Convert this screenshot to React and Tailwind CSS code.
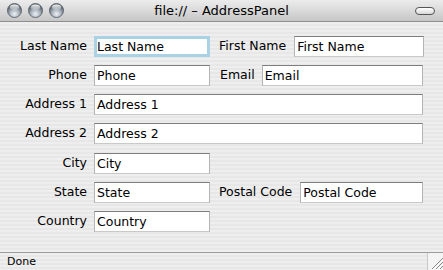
import React from "react";

function Light() {
  return (
    <svg width="15" height="15" viewBox="0 0 15 15" className="block">
      <defs>
        <radialGradient id="lg" cx="50%" cy="75%" r="60%">
          <stop offset="0%" stopColor="#eef2f6" />
          <stop offset="55%" stopColor="#aab3bd" />
          <stop offset="100%" stopColor="#5e6670" />
        </radialGradient>
        <linearGradient id="hl" x1="0" y1="0" x2="0" y2="1">
          <stop offset="0%" stopColor="#ffffff" stopOpacity="0.95" />
          <stop offset="100%" stopColor="#ffffff" stopOpacity="0.1" />
        </linearGradient>
      </defs>
      <circle cx="7.5" cy="7.5" r="7" fill="url(#lg)" stroke="#5a626b" strokeWidth="0.9" />
      <ellipse cx="7.5" cy="4.3" rx="4.6" ry="2.8" fill="url(#hl)" />
    </svg>
  );
}

function Field({ value, focus, className = "" }) {
  return (
    <div
      className={
        "h-[21px] bg-white flex items-center overflow-hidden whitespace-nowrap " +
        (focus
          ? "border-[3px] border-[#a9d2e6] pl-[0px] "
          : "border border-[#9a9a9a] border-t-[#7d7d7d] border-b-[#c9c9c9] border-x-[#b4b4b4] pl-[2px] ") +
        className
      }
    >
      <span className="text-[12.5px] text-black leading-none pt-[1px]">{value}</span>
    </div>
  );
}

function Label({ children, className = "" }) {
  return (
    <div className={"text-[12.5px] text-black leading-none whitespace-nowrap " + className}>
      {children}
    </div>
  );
}

export default function App() {
  const stripe =
    "bg-[repeating-linear-gradient(to_bottom,#eeeeee_0px,#eeeeee_2px,#e7e7e7_2px,#e7e7e7_4px)]";
  return (
    <div
      className="w-[443px] h-[270px] flex flex-col overflow-hidden"
      style={{ fontFamily: '"DejaVu Sans", "Liberation Sans", sans-serif' }}
    >
      {/* Title bar */}
      <div className="h-[22px] shrink-0 relative flex items-center justify-center bg-gradient-to-b from-[#ececec] via-[#dadada] to-[#c6c6c6] border-b border-[#8e8e8e]">
        <div className="absolute left-[7px] top-[3px] flex gap-[6px]">
          <Light />
          <Light />
          <Light />
        </div>
        <span className="text-[13px] text-black leading-none">file:// – AddressPanel</span>
        <div className="absolute right-[8px] top-[7px] w-[20px] h-[8px] rounded-full border border-[#555] bg-gradient-to-b from-[#ffffff] to-[#d8d8d8]" />
      </div>

      {/* Form */}
      <div className={"flex-1 flex flex-col gap-[8px] pt-[14px] pr-[20px] " + stripe}>
        <div className="flex items-center">
          <Label className="w-[87px] text-right">Last Name</Label>
          <Field value="Last Name" focus className="ml-[7px] w-[116px]" />
          <Label className="ml-[9px]">First Name</Label>
          <Field value="First Name" className="ml-[8px] flex-1 -mr-[1px]" />
        </div>
        <div className="flex items-center">
          <Label className="w-[87px] text-right">Phone</Label>
          <Field value="Phone" className="ml-[7px] w-[116px]" />
          <Label className="ml-[10px]">Email</Label>
          <Field value="Email" className="ml-[7px] flex-1" />
        </div>
        <div className="flex items-center">
          <Label className="w-[87px] text-right">Address 1</Label>
          <Field value="Address 1" className="ml-[7px] flex-1" />
        </div>
        <div className="flex items-center">
          <Label className="w-[87px] text-right">Address 2</Label>
          <Field value="Address 2" className="ml-[7px] flex-1" />
        </div>
        <div className="flex items-center mt-[1px]">
          <Label className="w-[87px] text-right">City</Label>
          <Field value="City" className="ml-[7px] w-[116px]" />
        </div>
        <div className="flex items-center">
          <Label className="w-[87px] text-right">State</Label>
          <Field value="State" className="ml-[7px] w-[116px]" />
          <Label className="ml-[9px]">Postal Code</Label>
          <Field value="Postal Code" className="ml-[8px] flex-1" />
        </div>
        <div className="flex items-center">
          <Label className="w-[87px] text-right">Country</Label>
          <Field value="Country" className="ml-[7px] w-[116px]" />
        </div>
      </div>

      {/* Status bar */}
      <div className={"h-[18px] shrink-0 flex items-stretch border-t border-[#9c9c9c] " + stripe}>
        <div className="flex-1 flex items-center pl-[7px]">
          <span className="text-[11px] text-black leading-none">Done</span>
        </div>
        <div className="w-[16px] border-l border-[#c8c8c8] bg-[#f4f4f4] relative">
          <svg width="16" height="17" viewBox="0 0 16 17" className="absolute inset-0">
            <line x1="15" y1="5" x2="4" y2="16" stroke="#8a8a8a" strokeWidth="1" />
            <line x1="15" y1="9" x2="8" y2="16" stroke="#8a8a8a" strokeWidth="1" />
            <line x1="15" y1="13" x2="12" y2="16" stroke="#8a8a8a" strokeWidth="1" />
            <line x1="16" y1="6" x2="5" y2="17" stroke="#ffffff" strokeWidth="1" />
            <line x1="16" y1="10" x2="9" y2="17" stroke="#ffffff" strokeWidth="1" />
          </svg>
        </div>
      </div>
    </div>
  );
}
